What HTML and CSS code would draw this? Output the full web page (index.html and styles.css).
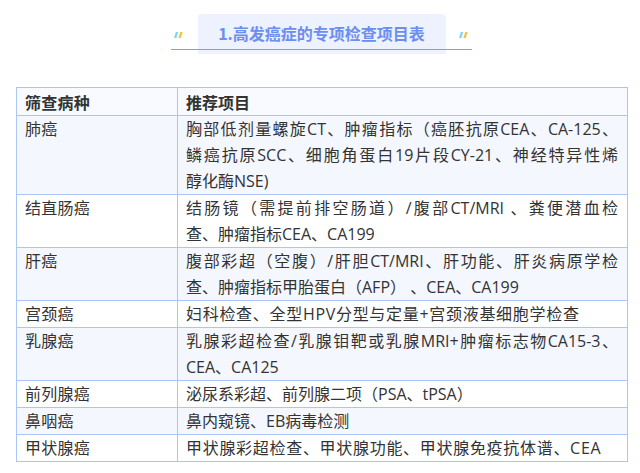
FILE: index.html
```html
<!DOCTYPE html>
<html lang="zh-CN">
<head>
<meta charset="utf-8">
<title>高发癌症的专项检查项目表</title>
<link rel="stylesheet" href="styles.css">
</head>
<body>
<div class="page">
  <div class="title-bar">
    <svg class="quote" width="10" height="6" viewBox="0 0 10 6"><polygon points="0,6 2.4,6 4.2,0 1.8,0" fill="#82d2f7"/><polygon points="4.4,6 6.8,6 8.6,0 6.2,0" fill="#f6c144"/></svg>
    <div class="title-box">1.高发癌症的专项检查项目表</div>
    <svg class="quote" width="10" height="6" viewBox="0 0 10 6"><polygon points="0,6 2.4,6 4.2,0 1.8,0" fill="#82d2f7"/><polygon points="4.4,6 6.8,6 8.6,0 6.2,0" fill="#f6c144"/></svg>
  </div>

  <table class="exam-table">
    <colgroup><col class="c1"><col class="c2"></colgroup>
    <thead>
      <tr><th>筛查病种</th><th>推荐项目</th></tr>
    </thead>
    <tbody>
      <tr><td>肺癌</td><td><span class="jl">胸部低剂量螺旋CT、肿瘤指标（癌胚抗原CEA、CA-125、</span><span class="jl">鳞癌抗原SCC、细胞角蛋白19片段CY-21、神经特异性烯</span>醇化酶NSE)</td></tr>
      <tr><td>结直肠癌</td><td><span class="jl">结肠镜（需提前排空肠道）/腹部CT/MRI 、粪便潜血检</span>查、肿瘤指标CEA、CA199</td></tr>
      <tr><td>肝癌</td><td><span class="jl">腹部彩超（空腹）/肝胆CT/MRI、肝功能、肝炎病原学检</span>查、肿瘤指标甲胎蛋白（AFP） 、CEA、CA199</td></tr>
      <tr><td>宫颈癌</td><td class="wide">妇科检查、全型HPV分型与定量+宫颈液基细胞学检查</td></tr>
      <tr><td>乳腺癌</td><td><span class="jl">乳腺彩超检查/乳腺钼靶或乳腺MRI+肿瘤标志物CA15-3、</span>CEA、CA125</td></tr>
      <tr><td>前列腺癌</td><td>泌尿系彩超、前列腺二项（PSA、tPSA）</td></tr>
      <tr><td>鼻咽癌</td><td>鼻内窥镜、EB病毒检测</td></tr>
      <tr><td>甲状腺癌</td><td class="wide">甲状腺彩超检查、甲状腺功能、甲状腺免疫抗体谱、CEA</td></tr>
    </tbody>
  </table>
</div>
</body>
</html>
```

FILE: styles.css
```css
html, body {
  margin: 0;
  padding: 0;
  background: #ffffff;
}

.page {
  width: 640px;
  padding: 14px 13px 0 16px;
  box-sizing: border-box;
  font-family: "Open Sans", "Noto Sans CJK SC", sans-serif;
  color: #333333;
}

.title-bar {
  position: relative;
  width: 301px;
  margin: 0 0 0 155px;
  display: flex;
  align-items: center;
  justify-content: space-between;
  padding: 0 3px;
  box-sizing: border-box;
}

.title-bar::after {
  content: "";
  position: absolute;
  left: 0;
  right: 0;
  bottom: 4px;
  height: 1.5px;
  background: #7c9ff0;
}

.quote {
  display: block;
  margin-top: 1px;
}

.title-box {
  width: 248px;
  height: 40px;
  box-sizing: border-box;
  background: #edf2fe;
  border-radius: 4px 4px 0 0;
  font-family: "Noto Sans CJK SC", sans-serif;
  font-size: 16px;
  font-weight: 700;
  color: #6b8ef0;
  text-align: center;
  line-height: 39px;
}

.exam-table {
  margin-top: 33px;
  width: 611px;
  border-collapse: collapse;
  table-layout: fixed;
  font-size: 16px;
  line-height: 26px;
}

.c1 { width: 161px; }
.c2 { width: 450px; }

.exam-table th,
.exam-table td {
  border: 1px solid #abc6f5;
  padding: 0 9px 0 8px;
  text-align: left;
  vertical-align: top;
  font-weight: 400;
}

.exam-table td:first-child,
.exam-table th:first-child {
  letter-spacing: 0.25px;
}

.exam-table td.wide {
  letter-spacing: 0.7px;
}

.jl {
  display: block;
  text-align: justify;
  text-align-last: justify;
  white-space: nowrap;
}

.exam-table th {
  font-family: "Noto Sans CJK SC", sans-serif;
  font-weight: 700;
  background: #f8faff;
  padding-top: 1px;
}

.exam-table tbody tr:nth-child(odd) td {
  background: #f4f7fe;
}

.exam-table tbody tr:nth-child(even) td {
  background: #ffffff;
}
```
